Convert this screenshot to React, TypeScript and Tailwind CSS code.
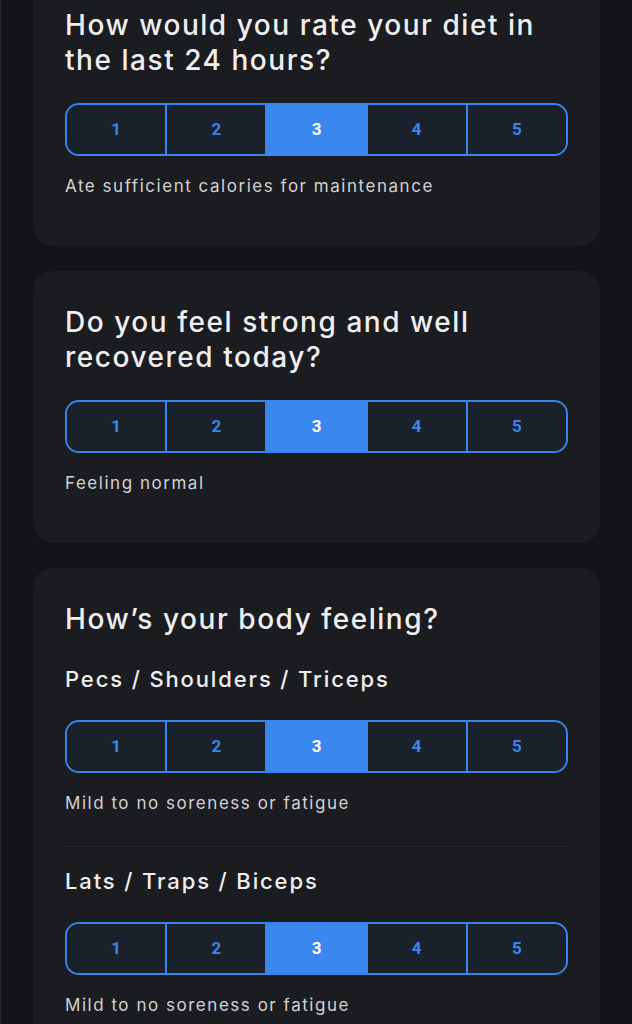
import React from "react";

type Rating = {
  label?: string;
  value: number;
  caption: string;
};

function Scale({ value }: { value: number }) {
  return (
    <div className="flex h-[53px] overflow-hidden rounded-[14px] border-2 border-[#3a84ee]">
      {[1, 2, 3, 4, 5].map((n) => (
        <div
          key={n}
          className={`flex flex-1 items-center justify-center font-['Roboto',sans-serif] text-[17px] font-bold ${n > 1 ? "border-l-2 border-[#3a84ee]" : ""} ${n === value ? "bg-[#3b87f0] text-white" : "bg-[#1b212b] text-[#3a84ee]"}`}
        >
          {n}
        </div>
      ))}
    </div>
  );
}

function Caption({ children }: { children: React.ReactNode }) {
  return <p className="mt-[18px] text-[17px] leading-[24px] tracking-[0.09em] text-[#d2d2d4]">{children}</p>;
}

function Card({ title, items }: { title: string; items: Rating[] }) {
  return (
    <section className="rounded-[20px] bg-[#1b1c20] px-[32px] pt-[34px] pb-[48px]">
      <h2 className="text-[28px] leading-[35px] font-medium tracking-[0.055em] text-[#efeff0]">{title}</h2>
      {items.map((item, i) => (
        <div
          key={i}
          className={i > 0 ? "mt-[31px] border-t border-[#28292e] pt-[19px]" : item.label ? "mt-[27px]" : "mt-[25px]"}
        >
          {item.label && (
            <h3 className="mb-[26px] text-[22px] leading-[30px] font-medium tracking-[0.085em] text-[#efeff0]">{item.label}</h3>
          )}
          <Scale value={item.value} />
          <Caption>{item.caption}</Caption>
        </div>
      ))}
    </section>
  );
}

export default function App() {
  return (
    <div className="h-[1024px] overflow-hidden border-l border-[#2a2b30] bg-[#131417] font-['Inter',sans-serif]">
      <div className="-mt-[26px] flex flex-col gap-[25px] px-[32px]">
        <Card
          title="How would you rate your diet in the last 24 hours?"
          items={[{ value: 3, caption: "Ate sufficient calories for maintenance" }]}
        />
        <Card
          title="Do you feel strong and well recovered today?"
          items={[{ value: 3, caption: "Feeling normal" }]}
        />
        <Card
          title="How’s your body feeling?"
          items={[
            { label: "Pecs / Shoulders / Triceps", value: 3, caption: "Mild to no soreness or fatigue" },
            { label: "Lats / Traps / Biceps", value: 3, caption: "Mild to no soreness or fatigue" },
          ]}
        />
      </div>
    </div>
  );
}
